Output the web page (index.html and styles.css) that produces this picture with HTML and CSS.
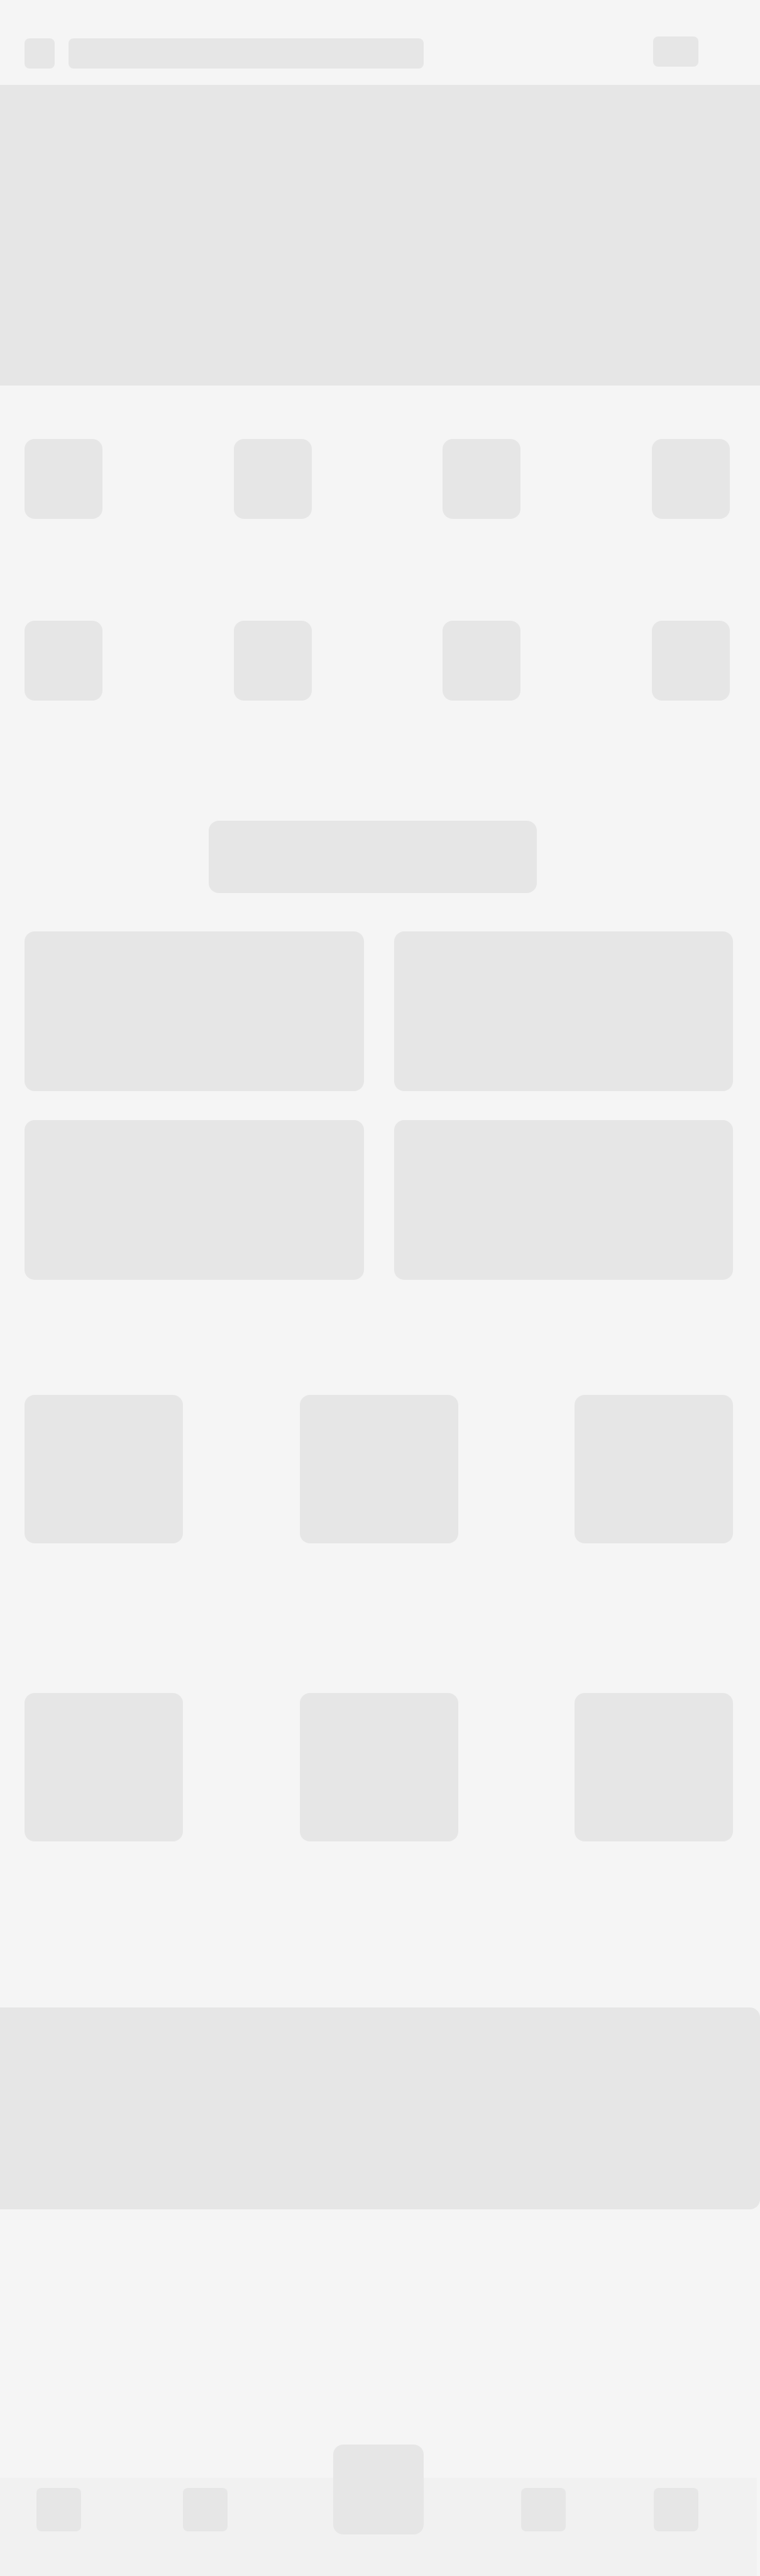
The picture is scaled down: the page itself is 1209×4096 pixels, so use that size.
FILE: index.html
```html
<!DOCTYPE html>
<html lang="en">
<head>
<meta charset="utf-8">
<meta name="viewport" content="width=device-width, initial-scale=1">
<title>Home</title>
<link rel="stylesheet" href="styles.css">
</head>
<body>
<div class="page">
  <header class="topbar">
    <button class="block block-small menu" type="button" aria-label="Menu"></button>
    <input class="block block-small search" type="search" aria-label="Search">
    <button class="block block-small action" type="button" aria-label="Messages"></button>
  </header>
  <main>
    <section class="hero"></section>
    <nav class="shortcuts" aria-label="Categories">
      <a class="block shortcut" href="#" aria-label="Category 1"></a>
      <a class="block shortcut" href="#" aria-label="Category 2"></a>
      <a class="block shortcut" href="#" aria-label="Category 3"></a>
      <a class="block shortcut" href="#" aria-label="Category 4"></a>
      <a class="block shortcut" href="#" aria-label="Category 5"></a>
      <a class="block shortcut" href="#" aria-label="Category 6"></a>
      <a class="block shortcut" href="#" aria-label="Category 7"></a>
      <a class="block shortcut" href="#" aria-label="Category 8"></a>
    </nav>
    <section class="featured">
      <div class="block heading"></div>
      <div class="cards">
        <div class="block card"></div>
        <div class="block card"></div>
        <div class="block card"></div>
        <div class="block card"></div>
      </div>
    </section>
    <section class="products">
      <div class="block product"></div>
      <div class="block product"></div>
      <div class="block product"></div>
      <div class="block product"></div>
      <div class="block product"></div>
      <div class="block product"></div>
    </section>
    <section class="banner"></section>
  </main>
  <nav class="tabbar" aria-label="Main">
    <a class="block block-small tab" href="#" aria-label="Home"></a>
    <a class="block block-small tab" href="#" aria-label="Browse"></a>
    <a class="block tab-main" href="#" aria-label="Create"></a>
    <a class="block block-small tab" href="#" aria-label="Cart"></a>
    <a class="block block-small tab" href="#" aria-label="Account"></a>
  </nav>
</div>
</body>
</html>
```
FILE: styles.css
```css
* {
  box-sizing: border-box;
}

body {
  margin: 0;
  background: #f5f5f5;
  font-family: "Liberation Sans", Arial, sans-serif;
}

.page {
  display: flex;
  flex-direction: column;
  min-height: 100vh;
}

.block {
  display: block;
  margin: 0;
  padding: 0;
  border: 0;
  border-radius: 16px;
  background: #e6e6e6;
  appearance: none;
}

.block-small {
  border-radius: 8px;
}

/* Top bar */
.topbar {
  display: flex;
  align-items: flex-end;
  padding: 58px 98px 26px 39px;
}

.menu {
  width: 48px;
  height: 48px;
}

.search {
  flex: 1;
  min-width: 0;
  height: 48px;
  margin-left: 22px;
}

.action {
  width: 72px;
  height: 48px;
  margin-bottom: 3px;
  margin-left: 365px;
}

.hero {
  height: 478px;
  background: #e6e6e6;
}

/* Category shortcuts */
.shortcuts {
  display: grid;
  grid-template-columns: repeat(4, 124px);
  justify-content: space-between;
  row-gap: 162px;
  padding: 85px 48px 0 39px;
}

.shortcut {
  height: 127px;
}

/* Featured cards */
.featured {
  padding: 191px 43px 0 39px;
}

.heading {
  width: 522px;
  height: 115px;
  margin: 0 0 61px 26%;
}

.cards {
  display: grid;
  grid-template-columns: 1fr 1fr;
  gap: 46px 48px;
}

.card {
  height: 254px;
}

/* Product thumbnails */
.products {
  display: grid;
  grid-template-columns: repeat(3, 252px);
  justify-content: space-between;
  row-gap: 238px;
  padding: 183px 43px 264px 39px;
}

.product {
  height: 236px;
}

.banner {
  height: 321px;
  border-radius: 0 16px 16px 0;
  background: #e6e6e6;
}

/* Bottom tab bar: the raised middle tab overlaps the page above */
.tabbar {
  display: grid;
  grid-template-columns: 233fr 239fr 299fr 211fr 71px;
  align-items: start;
  height: 156px;
  margin-top: auto;
  margin-right: 5px;
  padding: 16px 93px 0 58px;
  background: #f1f1f1;
}

.tab {
  width: 71px;
  height: 69px;
}

.tab-main {
  width: 144px;
  height: 143px;
  margin-top: -69px;
}
```
